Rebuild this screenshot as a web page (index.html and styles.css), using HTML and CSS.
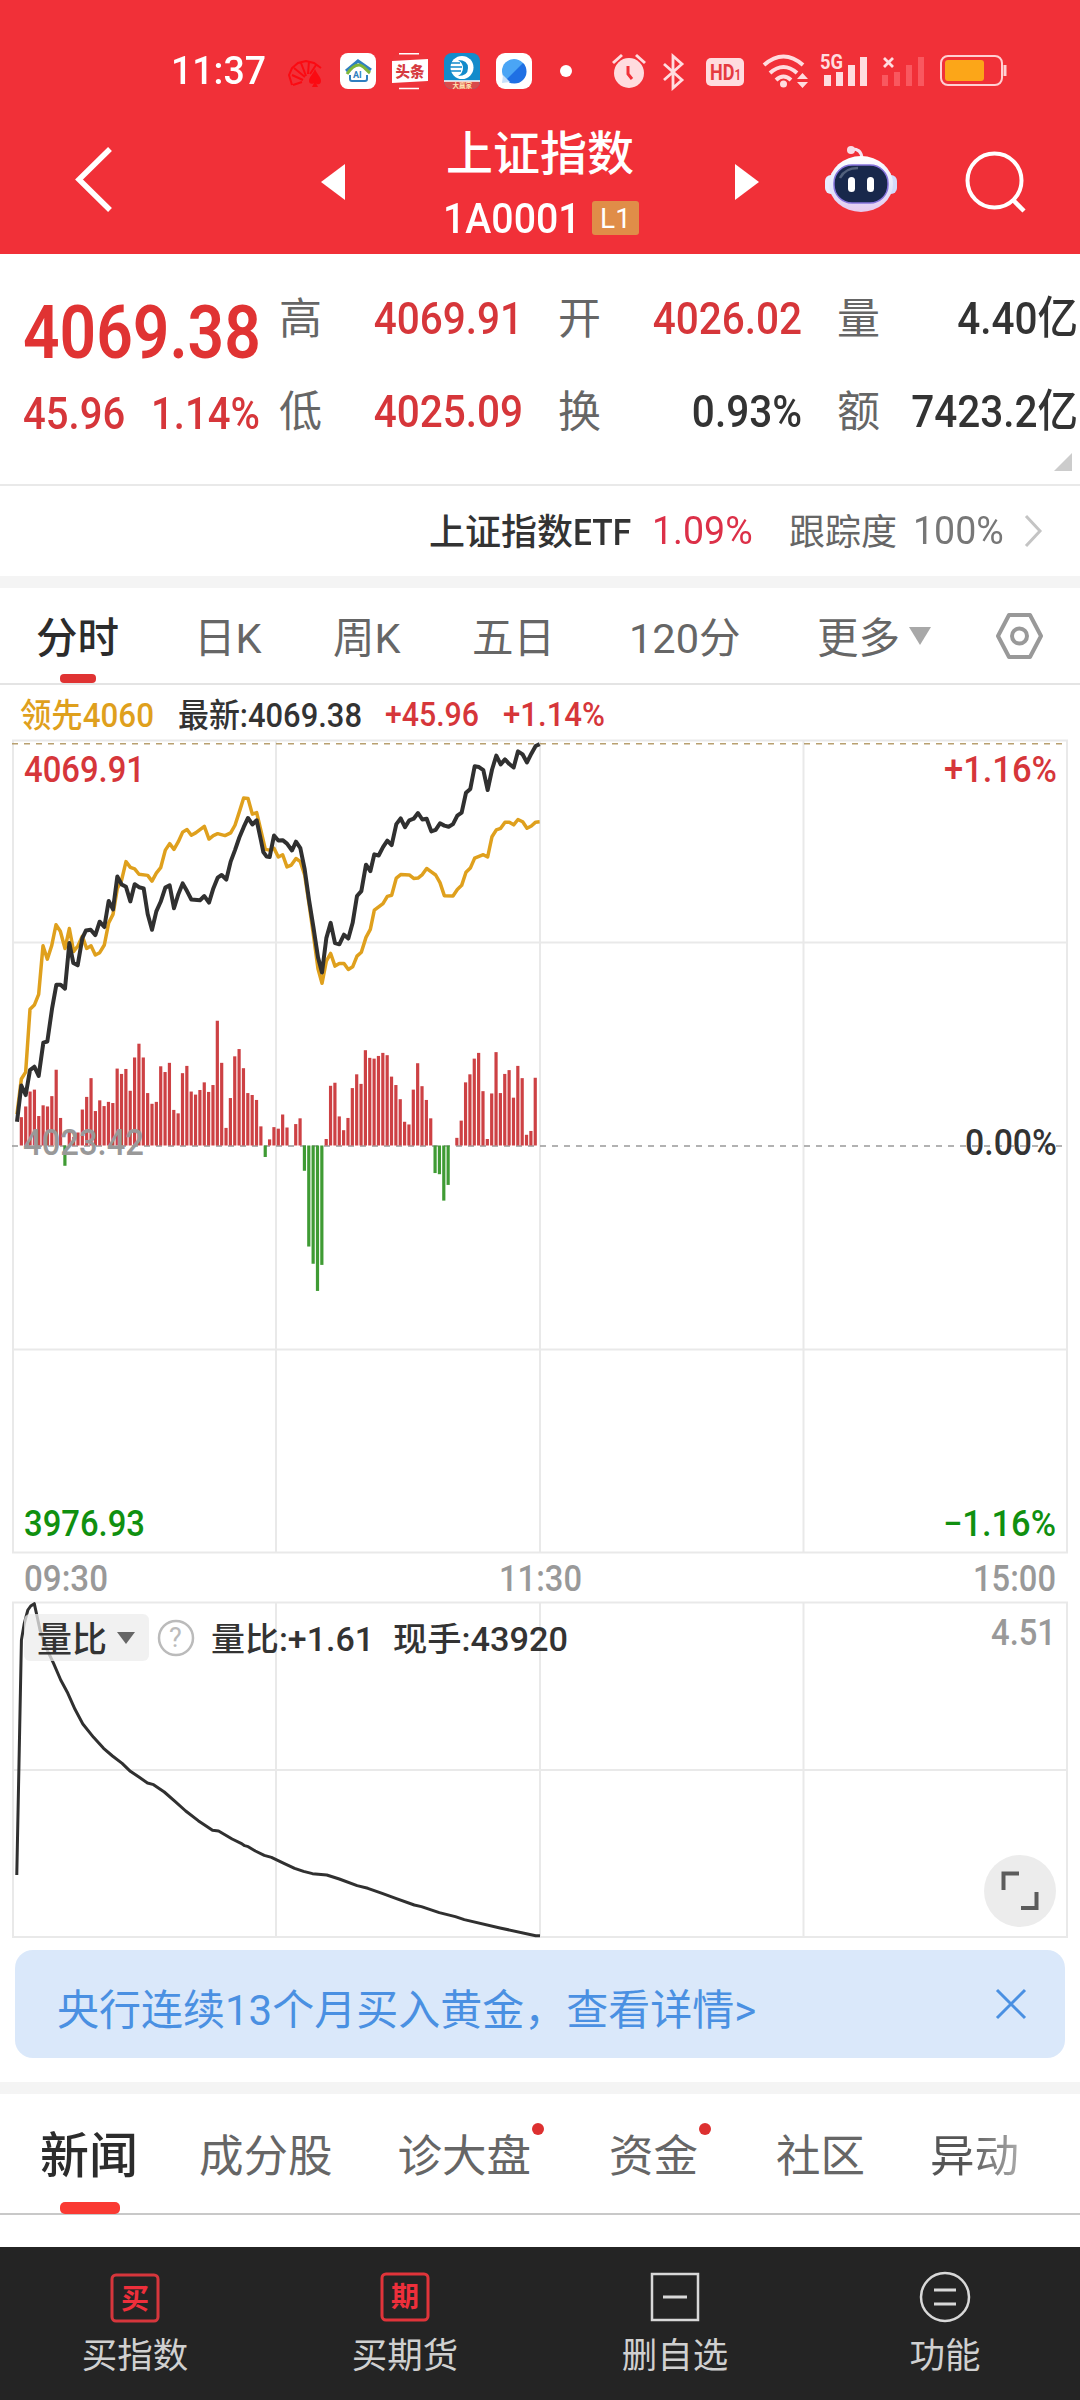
FILE: index.html
```html
<!DOCTYPE html>
<html lang="zh-CN">
  <head>
    <meta charset="UTF-8" />
    <meta name="viewport" content="width=device-width, initial-scale=1.0" />
    <title>上证指数</title>
    <link rel="stylesheet" href="styles.css">
  </head>
  <body>
    <header class="header">
      <div class="status">
        <span class="clock">11:37</span>
        <svg class="apps" width="248" height="40" viewBox="286 51 248 40">
          <g fill="none" stroke="#fb0a12" stroke-width="2">
            <path d="M292 85l-3-10 3-7 6-5 8-2 8 2 7 5M292 75l11 5M294 68l11 9M301 63l5 13M309 61l-1 13M316 65l-6 9M293 85l9-3" />
          </g>
          <path d="M315 69c2 5 6 8 6 12 0 4-4 4-5 2l2 4h-6l2-4c-3 2-5 0-5-2 0-4 4-7 6-12z" fill="#fb0a12" />
          <rect x="340" y="53" width="36" height="36" rx="8" fill="#fff" />
          <path d="M346 71l12-10 13 9" fill="none" stroke="#2f7fc0" stroke-width="3" />
          <path d="M347 74c4-6 8-9 12-9s6 4 11 8" fill="none" stroke="#7cb63a" stroke-width="3" />
          <path d="M350 75v4q0 2 2 2h13q2 0 2-2v-4" fill="none" stroke="#2f7fc0" stroke-width="2" />
          <text x="353" y="78" font-size="9" font-weight="700" fill="#2f7fc0">AI</text>
          <rect x="392" y="53" width="36" height="36" rx="8" fill="#ee333a" />
          <path d="M399 53.800h20M399 88.500h20" stroke="#fff" stroke-width="1.500" />
          <path d="M392 61l36-2v22l-36 2z" fill="#fff" />
          <text x="395.500" y="76.500" font-size="14.500" font-weight="900" fill="#d63a40">头条</text>
          <rect x="444" y="53" width="36" height="36" rx="8" fill="#138bcb" />
          <path d="M444 81h36q-1 8-8 8h-20q-7 0-8-8z" fill="#d84a4a" />
          <circle cx="462" cy="67.500" r="11.500" fill="#fff" />
          <path d="M458 60q10 0 10 8t-10 8q5-3 5-8t-5-8z" fill="#138bcb" />
          <path d="M450 63h10M449 67h13M450 71h11" stroke="#138bcb" stroke-width="1.500" />
          <path d="M444 81h36" stroke="#fff" stroke-width="1.500" />
          <text x="452.500" y="87.500" font-size="6.500" font-weight="700" fill="#ffe3b0">大赢家</text>
          <rect x="496" y="53" width="36" height="36" rx="9" fill="#fff" />
          <circle cx="514" cy="71" r="12" fill="#4aa5f5" />
          <path d="M523 63a12 12 0 0 1-17 17z" fill="#1f70e4" />
          <path d="M503 75l-1 8 8-1z" fill="#c6e0fb" />
        </svg>
        <i class="more-dot"></i>
        <svg class="signals" width="400" height="40" viewBox="610 51 400 40">
          <g fill="#ffdcdf">
            <circle cx="629" cy="73" r="15" />
            <path d="M613 63l9-8M645 63l-9-8" stroke="#ffdcdf" stroke-width="3" />
            <path d="M628 66v8l4 5" fill="none" stroke="#f13038" stroke-width="3" />
            <path d="M664 64l18 16-9 8V56l9 8-18 16" fill="none" stroke="#ffdcdf" stroke-width="2.800" />
            <rect x="706" y="58" width="38" height="28" rx="5" />
            <text x="710" y="79.500" font-size="22" font-weight="700" fill="#e53a40" textLength="31" lengthAdjust="spacingAndGlyphs">HD<tspan font-size="14">1</tspan></text>
            <g fill="none" stroke="#ffdcdf" stroke-width="4">
              <path d="M764 65q19.500-17 39 0" />
              <path d="M770 73q13.500-12 27 0" />
              <path d="M776 80q7.500-7 15 0" />
            </g>
            <circle cx="783.500" cy="84" r="3.500" />
            <path d="M797 79h11l-5.500-6zM797 82h11l-5.500 6z" />
            <text x="820" y="69" font-size="20" font-weight="700" textLength="23" lengthAdjust="spacingAndGlyphs">5G</text>
            <path d="M824 75h7v11h-7zM836 72h7v14h-7zM848 65h7v21h-7zM860 57h7v29h-7z" />
            <path d="M884 58l9 9M893 58l-9 9" stroke="#ffdcdf" stroke-width="2.800" />
            <path fill="#f9585f" d="M882 75h6v11h-6zM894 72h6v14h-6zM906 65h6v21h-6zM918 57h6v29h-6z" />
            <rect x="941" y="56" width="61" height="29" rx="7" fill="none" stroke="#ffd0d3" stroke-width="2" />
            <rect x="945" y="60" width="39" height="21" rx="3" fill="#fca618" />
            <path d="M1005 65v11" stroke="#ffd0d3" stroke-width="3" />
          </g>
        </svg>
      </div>
      <nav class="nav">
        <svg class="back" width="40" height="68" viewBox="0 0 40 68">
          <path d="M36 4L5 34.500 36 65" fill="none" stroke="#fff" stroke-width="5.500" />
        </svg>
        <svg class="prev" width="24" height="36" viewBox="0 0 24 36"><path d="M24 0v36L0 18z" fill="#fff" /></svg>
        <div class="title">
          <h1>上证指数</h1>
          <p><span class="code">1A0001</span><b class="level">L1</b></p>
        </div>
        <svg class="next" width="24" height="36" viewBox="0 0 24 36"><path d="M0 0v36l24-18z" fill="#fff" /></svg>
        <svg class="robot" width="74" height="70" viewBox="824 143 74 70">
          <defs>
            <linearGradient id="shell" x1="0" y1="0" x2="0" y2="1">
              <stop offset="0" stop-color="#fff" />
              <stop offset=".6" stop-color="#e2e5fb" />
              <stop offset="1" stop-color="#e6c9ee" />
            </linearGradient>
          </defs>
          <path d="M851 149q10-1 11 9" fill="none" stroke="#f6e4f2" stroke-width="3" />
          <circle cx="851" cy="150" r="4" fill="#f8dce6" />
          <rect x="825" y="175" width="14" height="19" rx="6" fill="#e9ecff" />
          <rect x="883" y="175" width="14" height="19" rx="6" fill="#d3dafb" />
          <ellipse cx="861" cy="184" rx="32" ry="28" fill="url(#shell)" />
          <rect x="834" y="165" width="54" height="38" rx="18" fill="#18284b" stroke="#8573dc" stroke-width="1.500" />
          <path d="M840 178q5-10 18-10" fill="none" stroke="#52617c" stroke-width="2.500" />
          <rect x="848" y="177" width="7" height="15" rx="3.500" fill="#fff" />
          <rect x="867" y="177" width="7" height="15" rx="3.500" fill="#fff" />
        </svg>
        <svg class="search" width="62" height="64" viewBox="965 151 62 64">
          <circle cx="994.500" cy="180.500" r="27" fill="none" stroke="#fff" stroke-width="4" />
          <path d="M1013 200l11 11" stroke="#fff" stroke-width="4.500" />
        </svg>
      </nav>
    </header>

    <section class="quote">
      <div class="price">
        <div class="last"><span>4069.38</span></div>
        <div class="change"><span>45.96</span><span>1.14%</span></div>
      </div>
      <dl class="stats">
        <dt>高</dt><dd class="red">4069.91</dd>
        <dt>开</dt><dd class="red">4026.02</dd>
        <dt>量</dt><dd>4.40亿</dd>
        <dt>低</dt><dd class="red">4025.09</dd>
        <dt>换</dt><dd>0.93%</dd>
        <dt>额</dt><dd>7423.2亿</dd>
      </dl>
      <i class="corner"></i>
    </section>

    <section class="etf">
      <span class="etf-name">上证指数<em>ETF</em></span>
      <span class="etf-rate">1.09%</span>
      <span class="etf-track">跟踪度</span>
      <span class="etf-full">100%</span>
      <svg width="20" height="34" viewBox="0 0 20 34"><path d="M2 2l14 15L2 32" fill="none" stroke="#c4c4c4" stroke-width="3" /></svg>
    </section>

    <div class="gap"></div>

    <nav class="periods">
      <span class="active">分时</span>
      <span>日K</span>
      <span>周K</span>
      <span>五日</span>
      <span>120分</span>
      <span class="more">更多<i></i></span>
      <svg width="50" height="48" viewBox="0 0 50 48">
        <path d="M14 3h21l11 21-11 21H14L3 24z" fill="none" stroke="#999" stroke-width="4" stroke-linejoin="round" />
        <circle cx="24.500" cy="24" r="7.500" fill="none" stroke="#999" stroke-width="4" />
      </svg>
    </nav>

    <svg class="chart" width="1080" height="1255" viewBox="0 685 1080 1255">
      <g class="label">
        <text x="20" y="727" fill="#dfa01d" textLength="134" lengthAdjust="spacingAndGlyphs">领先4060</text>
        <text x="178" y="727" fill="#333" textLength="184" lengthAdjust="spacingAndGlyphs">最新:4069.38</text>
        <text x="385" y="726" fill="#d6363a" textLength="94" lengthAdjust="spacingAndGlyphs">+45.96</text>
        <text x="503" y="726" fill="#d6363a" textLength="102" lengthAdjust="spacingAndGlyphs">+1.14%</text>
      </g>

      <g class="grid">
        <path d="M13 740.500H1067V1552.500H13zM13 942.500H1067M13 1349.500H1067M276 740V1552M540 740V1552M803.500 740V1552" />
        <path d="M13 1602.500H1067V1937H13zM13 1770H1067M276 1602V1937M540 1602V1937M803.500 1602V1937" />
      </g>
      <path d="M12 743.700H1067" stroke="#b8a070" stroke-width="1.500" stroke-dasharray="6 6" />
      <path d="M12 1146H1067" stroke="#999" stroke-width="1.500" stroke-dasharray="6 6" />

      <g id="bars"></g>

      <g class="lines" transform="translate(0 720) scale(.33333 .38270)">
        <polyline class="lead" points="51,1030 64,938 77,920 90,756 103,745 116,717 129,590 142,625 155,590 168,535 181,552 195,597 208,545 221,605 234,590 247,565 260,597 273,590 286,614 299,608 313,588 326,530 339,508 352,440 365,418 378,370 391,385 404,389 417,403 443,406 456,421 469,400 482,386 496,340 509,323 522,338 535,318 548,293 561,286 574,301 587,295 613,278 627,311 640,302 653,297 675,302 692,295 705,275 718,240 731,204 744,205 757,246 770,242 783,290 796,338 809,340 822,335 835,358 848,352 861,384 874,379 888,362 901,370 914,405 927,480 940,560 954,650 966,688 979,630 992,610 1005,643 1018,636 1032,636 1045,652 1058,645 1071,617 1084,607 1098,568 1111,547 1123,497 1149,480 1162,461 1175,458 1189,413 1202,404 1228,405 1241,414 1254,413 1267,404 1280,388 1294,397 1307,405 1320,425 1333,459 1359,460 1372,443 1385,432 1398,398 1411,387 1424,361 1450,352 1463,358 1476,305 1489,287 1502,283 1515,267 1528,267 1541,274 1554,260 1568,266 1581,283 1594,277 1607,267 1619,266" />
        <polyline class="index" points="51,1050 64,955 77,980 90,915 103,906 116,930 130,843 142,840 156,755 169,692 182,692 195,702 208,583 220,635 233,641 247,570 258,550 272,548 286,562 299,527 313,541 326,473 339,495 352,409 365,430 378,436 391,474 404,429 417,437 431,440 443,507 456,548 469,500 482,475 496,438 509,432 522,492 535,455 548,427 561,447 574,469 600,471 613,460 627,477 640,440 653,412 665,405 679,417 692,370 705,340 718,307 731,280 744,256 757,273 770,262 783,315 790,345 800,357 809,358 822,302 835,315 848,314 861,323 876,341 888,318 901,335 914,390 927,470 940,540 954,620 966,660 979,570 992,530 1005,583 1018,586 1032,561 1045,571 1058,530 1071,460 1084,447 1098,378 1111,395 1123,351 1136,354 1149,332 1162,315 1175,327 1189,272 1202,257 1215,280 1228,262 1241,258 1254,243 1267,260 1280,258 1294,291 1307,287 1320,270 1333,276 1346,279 1359,272 1372,250 1385,242 1398,190 1411,180 1424,121 1437,123 1450,131 1463,183 1476,130 1489,93 1502,116 1515,103 1528,115 1541,124 1554,82 1568,90 1581,111 1594,88 1607,68 1619,63" />
      </g>
      <g class="lines" transform="translate(0 1480) scale(.35714 .33333)">
        <polyline class="ratio" points="47,1185 60,480 68,430 78,390 86,378 96,371 103,405 112,450 130,505 150,550 170,600 190,640 210,688 232,732 262,772 290,805 315,828 342,850 365,874 390,892 413,909 430,914 460,936 490,964 520,993 555,1022 595,1051 612,1053 650,1077 675,1090 685,1097 695,1100 715,1113 740,1126 760,1132 795,1150 825,1165 850,1174 875,1181 915,1185 950,1197 1000,1217 1030,1225 1070,1240 1110,1256 1160,1275 1180,1280 1230,1298 1275,1310 1300,1319 1400,1344 1500,1367 1512,1367" />
      </g>

      <g class="axis">
        <text x="24" y="782" fill="#d6363a" textLength="121" lengthAdjust="spacingAndGlyphs">4069.91</text>
        <text x="944" y="782" fill="#d6363a" textLength="113" lengthAdjust="spacingAndGlyphs">+1.16%</text>
        <text x="23" y="1155" fill="#999" textLength="121" lengthAdjust="spacingAndGlyphs">4023.42</text>
        <text x="965" y="1155" fill="#333" textLength="92" lengthAdjust="spacingAndGlyphs">0.00%</text>
        <text x="24" y="1536" fill="#109010" textLength="121" lengthAdjust="spacingAndGlyphs">3976.93</text>
        <text x="943" y="1536" fill="#109010" textLength="113" lengthAdjust="spacingAndGlyphs">−1.16%</text>
        <g fill="#999">
          <text x="24" y="1591" textLength="84" lengthAdjust="spacingAndGlyphs">09:30</text>
          <text x="499" y="1591" textLength="83" lengthAdjust="spacingAndGlyphs">11:30</text>
          <text x="973" y="1591" textLength="83" lengthAdjust="spacingAndGlyphs">15:00</text>
          <text x="991" y="1645" textLength="65" lengthAdjust="spacingAndGlyphs">4.51</text>
        </g>
      </g>

      <rect x="24" y="1614" width="125" height="47" rx="6" fill="#ececec" fill-opacity=".75" />
      <path d="M117 1632h18l-9 12z" fill="#666" />
      <circle cx="176" cy="1638" r="17" fill="none" stroke="#bbb" stroke-width="2.500" />
      <text x="169" y="1647" font-size="27" fill="#bbb">?</text>
      <g class="label" fill="#333">
        <text x="37" y="1652" font-size="35">量比</text>
        <text x="211" y="1651" textLength="163" lengthAdjust="spacingAndGlyphs">量比:+1.61</text>
        <text x="393" y="1651" textLength="175" lengthAdjust="spacingAndGlyphs">现手:43920</text>
      </g>
      <circle cx="1020" cy="1891" r="36" fill="#ececec" />
      <path d="M1003.500 1890v-16.500H1019M1036.500 1892v16H1021" fill="none" stroke="#5c5c5c" stroke-width="4" />
    </svg>

    <div class="banner">
      <span>央行连续13个月买入黄金，查看详情&gt;</span>
      <svg width="32" height="32" viewBox="0 0 32 32"><path d="M2 2l28 28M30 2L2 30" stroke="#4a90e2" stroke-width="3" /></svg>
    </div>

    <div class="gap"></div>

    <nav class="sections">
      <span class="active">新闻</span>
      <span>成分股</span>
      <span class="new">诊大盘</span>
      <span class="new">资金</span>
      <span>社区</span>
      <span class="fade">异动</span>
    </nav>

    <footer class="toolbar">
      <div>
        <svg width="52" height="52" viewBox="0 0 52 52">
          <rect x="3" y="4" width="46" height="46" rx="4" fill="none" stroke="#d6363c" stroke-width="3" />
          <text x="12" y="38" font-size="28" font-weight="700" fill="#ee2f3b">买</text>
        </svg>
        买指数
      </div>
      <div>
        <svg width="52" height="52" viewBox="0 0 52 52">
          <rect x="3" y="3" width="46" height="46" rx="4" fill="none" stroke="#e0343a" stroke-width="3" />
          <text x="12" y="36" font-size="28" font-weight="700" fill="#ee2f3b">期</text>
        </svg>
        买期货
      </div>
      <div>
        <svg width="52" height="52" viewBox="0 0 52 52">
          <rect x="3" y="3" width="46" height="46" fill="none" stroke="#d8d8d8" stroke-width="2.500" />
          <path d="M14 26h24" stroke="#d8d8d8" stroke-width="3" />
        </svg>
        删自选
      </div>
      <div>
        <svg width="52" height="52" viewBox="0 0 52 52">
          <circle cx="26" cy="26" r="24" fill="none" stroke="#d8d8d8" stroke-width="2.500" />
          <path d="M15 19h22M15 33h22" stroke="#d8d8d8" stroke-width="3" />
        </svg>
        功能
      </div>
    </footer>

    <script>
      // one value per minute from 09:31, zero line at 1112, lower is higher on screen
      const ZERO = 1112;
      const levels = [
        1038, 1010, 971, 966, 1035, 1007, 1010, 983, 914, 1040, 1165, 1075,
        1090, 1078, 1018, 985, 936, 1022, 994, 1009, 998, 1001, 911, 925, 912,
        969, 882, 846, 882, 975, 1003, 998, 905, 920, 896, 1019, 1028, 923,
        904, 971, 979, 967, 947, 972, 954, 786, 896, 1066, 988, 879, 860, 910,
        975, 980, 993, 1062, 1142, 1096, 1064, 1068, 1031, 1065, 1112, 1056,
        1041, 1178, 1376, 1421, 1492, 1424, 1095, 956, 948, 1036, 1072, 1040,
        962, 926, 951, 863, 883, 885, 878, 870, 876, 932, 954, 991, 1050,
        1057, 966, 897, 957, 993, 1041, 1184, 1187, 1256, 1215, 1112, 1092,
        1047, 947, 926, 885, 870, 970, 1095, 976, 868, 975, 925, 915, 987,
        904, 936, 1084, 1074, 935,
      ];
      const bars = document.getElementById("bars");

      levels.forEach((level, i) => {
        const height = (ZERO - level) * 0.3827;
        const bar = document.createElementNS("http://www.w3.org/2000/svg", "rect");
        bar.setAttribute("x", 17 + (i + 1) * 4.355 - 1.6);
        bar.setAttribute("y", height > 0 ? 1145.5 - height : 1145.5);
        bar.setAttribute("width", 3.2);
        bar.setAttribute("height", Math.abs(height));
        bar.setAttribute("fill", height > 0 ? "#cd4144" : "#3f9b34");
        bars.appendChild(bar);
      });
    </script>
  </body>
</html>
```
FILE: styles.css
```css
* {
  box-sizing: border-box;
}

body {
  margin: 0;
  width: 1080px;
  height: 2400px;
  overflow: hidden;
  background: #fff;
  color: #333;
  font-family: Roboto, "Noto Sans CJK SC", sans-serif;
  display: flex;
  flex-direction: column;
}

svg {
  display: block;
  flex: none;
}

h1,
p,
dl,
dd {
  margin: 0;
}

.header {
  height: 254px;
  background: #f13038;
  color: #fff;
}

.status {
  height: 110px;
  padding: 51px 0 0 171px;
  display: flex;
}

.clock {
  width: 115px;
  font-size: 39px;
  font-weight: 500;
  line-height: 41px;
  transform: scaleX(0.96);
  transform-origin: left;
}

.more-dot {
  width: 12px;
  height: 12px;
  margin: 14px 38px 0 26px;
  border-radius: 50%;
  background: #fff;
}

.nav {
  height: 144px;
  padding-left: 74px;
  display: flex;
}

.back {
  margin-top: 35px;
}

.prev {
  margin: 54px 0 0 207px;
}

.title {
  width: 390px;
  text-align: center;
}

.title h1 {
  margin-top: 14px;
  font-size: 47px;
  font-weight: 500;
  line-height: 60px;
}

.title p {
  height: 60px;
  padding: 17px 0 0 98px;
  display: flex;
}

.code {
  width: 149px;
  font-size: 42px;
  line-height: 36px;
  text-align: left;
  font-weight: 500;
  transform: scaleX(0.935);
  transform-origin: left;
}

.level {
  width: 47px;
  height: 34px;
  border-radius: 3px;
  background: #e08d48;
  font-size: 28px;
  font-weight: 400;
  line-height: 35px;
}

.next {
  margin-top: 54px;
}

.robot {
  margin: 33px 0 0 65px;
}

.search {
  margin: 41px 0 0 67px;
}

.quote {
  height: 232px;
  padding: 18px 2px 0 23px;
  border-bottom: 2px solid #e9e9e9;
  display: flex;
  position: relative;
}

.price {
  width: 256px;
  color: #e03333;
}

.last {
  height: 92px;
  padding-top: 19px;
  font-size: 74.5px;
  font-weight: 600;
  line-height: 84px;
}

.last span {
  display: block;
  transform: scaleX(0.86);
  transform-origin: left;
}

.change {
  padding-top: 20px;
  display: flex;
  font-size: 45px;
  font-weight: 500;
  line-height: 60px;
  color: #d6363a;
}

.change span {
  width: 128px;
  transform: scaleX(0.89);
  transform-origin: left;
}

.stats {
  width: 799px;
  display: grid;
  grid-template-columns: 42px 202px 78px 201px 77px 1fr;
  grid-template-rows: 93px 93px;
}

.stats dt {
  padding-top: 4px;
  font-size: 43px;
  line-height: 86px;
  color: #666;
}

.stats dt:nth-of-type(3n + 2),
.stats dt:nth-of-type(3n) {
  padding-left: 35px;
}

.stats dd {
  padding-top: 4px;
  font-size: 45px;
  font-weight: 500;
  line-height: 86px;
  text-align: right;
  white-space: nowrap;
  transform: scaleX(0.9);
  transform-origin: right;
}

.stats .red {
  color: #d6363a;
}

.corner {
  position: absolute;
  right: 8px;
  bottom: 13px;
  border-left: 18px solid transparent;
  border-bottom: 18px solid #ccc;
}

.etf {
  height: 90px;
  padding-left: 429px;
  display: flex;
  align-items: center;
  font-size: 36px;
  line-height: 60px;
  white-space: nowrap;
}

.etf-name,
.etf-track {
  padding-top: 4px;
}

.etf-name {
  width: 223px;
  font-weight: 500;
}

.etf-name em {
  display: inline-block;
  font-style: normal;
  transform: scaleX(0.93);
  transform-origin: left;
}

.etf-rate,
.etf-full {
  font-size: 39.5px;
  transform: scaleX(0.95);
  transform-origin: left;
}

.etf-rate {
  width: 137px;
  color: #dc3048;
}

.etf-track {
  width: 124px;
  color: #666;
}

.etf-full {
  width: 111px;
  color: #777;
}

.gap {
  height: 12px;
  flex: none;
  background: #f4f4f4;
}

.periods {
  height: 97px;
  padding-left: 36px;
  border-bottom: 2px solid #e4e4e4;
  display: flex;
  align-items: center;
  font-size: 41.5px;
  line-height: 101px;
  color: #666;
}

.periods span {
  height: 95px;
  white-space: nowrap;
}

.periods span:nth-child(1) {
  width: 158px;
}

.periods span:nth-child(2) {
  width: 139px;
}

.periods span:nth-child(3) {
  width: 139px;
}

.periods span:nth-child(4) {
  width: 157px;
}

.periods span:nth-child(5) {
  width: 188px;
}

.periods .more {
  width: 178px;
}

.periods .active {
  position: relative;
  color: #2c2c2c;
  font-weight: 500;
}

.periods .active::after {
  content: "";
  position: absolute;
  left: 24px;
  bottom: 0;
  width: 36px;
  height: 9px;
  border-radius: 4px;
  background: #e03333;
}

.more i {
  display: inline-block;
  margin: 0 0 8px 9px;
  border: 11px solid transparent;
  border-top: 18px solid #a8a8a8;
  border-bottom: 0;
}

.chart .label {
  font-size: 33px;
}

.chart .axis {
  font-size: 36px;
}

.chart .label,
.chart .axis {
  font-weight: 500;
}

.grid path {
  fill: none;
  stroke: #e9e9e9;
  stroke-width: 2;
}

.lines polyline {
  fill: none;
  stroke: #303030;
  stroke-width: 4;
  stroke-linejoin: round;
  vector-effect: non-scaling-stroke;
}

.lines .lead {
  stroke: #dfa01d;
  stroke-width: 3.5;
}

.lines .ratio {
  stroke-width: 3;
}

.banner {
  height: 108px;
  margin: 10px 15px 24px;
  padding: 0 38px 0 42px;
  border-radius: 18px;
  background: #dae8fa;
  color: #4a90e2;
  font-size: 42px;
  display: flex;
  flex: none;
  justify-content: space-between;
  align-items: center;
}

.banner span {
  padding-top: 4px;
}

.sections {
  height: 121px;
  flex: none;
  padding-left: 40px;
  border-bottom: 2px solid #c8c8c8;
  display: flex;
  font-size: 44.5px;
  line-height: 126px;
  color: #666;
}

.sections span {
  height: 120px;
  position: relative;
  margin-right: 65px;
}

.sections .active {
  margin-right: 61px;
  color: #2c2c2c;
  font-size: 49px;
  font-weight: 500;
}

.sections .active::after {
  content: "";
  position: absolute;
  left: 20px;
  bottom: 0;
  width: 60px;
  height: 12px;
  border-radius: 5px;
  background: #fa3a33;
}

.sections .new {
  margin-right: 78px;
}

.sections .new::after {
  content: "";
  position: absolute;
  right: -13px;
  top: 29px;
  width: 12px;
  height: 12px;
  border-radius: 50%;
  background: #dd3030;
}

.sections .fade {
  margin-right: 0;
  background: linear-gradient(90deg, #555 40%, #aaa);
  -webkit-background-clip: text;
  background-clip: text;
  color: transparent;
}

.toolbar {
  height: 153px;
  margin-top: auto;
  padding-top: 24px;
  background: #242424;
  display: grid;
  grid-template-columns: repeat(4, 1fr);
  color: #d0d0d0;
  font-size: 35.5px;
  line-height: 56px;
  text-align: center;
}

.toolbar svg {
  margin: 0 auto 5px;
}
```
